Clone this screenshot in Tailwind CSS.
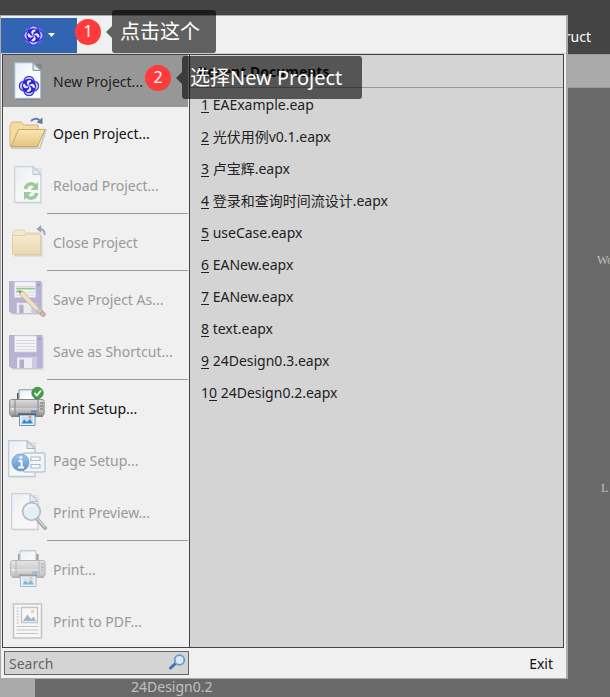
<!DOCTYPE html>
<html lang="zh-CN">
<head>
<meta charset="utf-8">
<title>Enterprise Architect</title>
<script src="https://cdn.jsdelivr.net/npm/@tailwindcss/browser@4"></script>
</head>
<body class="relative min-h-screen overflow-hidden bg-[#696969] font-['Noto_Sans','Noto_Sans_CJK_SC',sans-serif] text-sm text-[#222]">

<!-- Shared gradients and symbols -->
<svg class="absolute size-0" aria-hidden="true">
  <defs>
    <linearGradient id="gPage" x1="0" y1="0" x2="1" y2="1"><stop offset="0" stop-color="#e6eef6"/><stop offset=".5" stop-color="#fbfdff"/><stop offset="1" stop-color="#fff"/></linearGradient>
    <linearGradient id="gFolder" x1="0" y1="0" x2="0" y2="1"><stop offset="0" stop-color="#f9e6b6"/><stop offset="1" stop-color="#e5c47c"/></linearGradient>
    <linearGradient id="gPrinter" x1="0" y1="0" x2="0" y2="1"><stop offset="0" stop-color="#dcdcdc"/><stop offset=".5" stop-color="#b8b8b8"/><stop offset=".55" stop-color="#d0d0d0"/><stop offset="1" stop-color="#969696"/></linearGradient>
    <linearGradient id="gInfo" x1="0" y1="0" x2="0" y2="1"><stop offset="0" stop-color="#6fb0ec"/><stop offset="1" stop-color="#1c5fb8"/></linearGradient>
    <symbol id="knot" viewBox="0 0 20 20">
      <g fill="#4038dc"><circle cx="10" cy="5.500" r="5.300"/><circle cx="14.500" cy="10" r="5.300"/><circle cx="10" cy="14.500" r="5.300"/><circle cx="5.500" cy="10" r="5.300"/></g>
      <g fill="#c8c8ff"><circle cx="10" cy="5.500" r="4.100"/><circle cx="14.500" cy="10" r="4.100"/><circle cx="10" cy="14.500" r="4.100"/><circle cx="5.500" cy="10" r="4.100"/></g>
      <circle cx="10" cy="10" r="6.800" fill="#2c24d0"/>
      <g fill="#ecebff">
        <path d="M10 10C7 8.500 7.200 5 10.500 4.300C12.200 4.500 12.500 5.500 11.500 6.300C9.800 7 9.500 8 10 10Z"/>
        <path d="M10 10C11.500 7 15 7.200 15.700 10.500C15.500 12.200 14.500 12.500 13.700 11.500C13 9.800 12 9.500 10 10Z"/>
        <path d="M10 10C13 11.500 12.800 15 9.500 15.700C7.800 15.500 7.500 14.500 8.500 13.700C10.200 13 10.500 12 10 10Z"/>
        <path d="M10 10C8.500 13 5 12.800 4.300 9.500C4.500 7.800 5.500 7.500 6.300 8.500C7 10.200 8 10.500 10 10Z"/>
      </g>
    </symbol>
    <symbol id="sheet" viewBox="0 0 28 38">
      <path d="M2 2H28V38H2Z" fill="#000" opacity=".1"/>
      <path d="M.7.7H19L26.800 8.500V36.300H.7Z" fill="url(#gPage)" stroke="#a3b5c6" stroke-width="1.2"/>
      <path d="M19 .8V8.500H26.800Z" fill="#dde6ee" stroke="#7f96ac" stroke-width="1"/>
    </symbol>
    <symbol id="floppy" viewBox="0 0 35 35">
      <path d="M2 2H35V35H3Z" fill="#000" opacity=".12"/>
      <path d="M.5.5H33V33H2.500L.5 31Z" fill="#928bc2" stroke="#8a83b8"/>
      <path d="M5.500.8H27.500V17H5.500Z" fill="#f8f8fc" stroke="#b9b4da" stroke-width=".7"/>
      <path d="M7 5.500H26M7 8.500H26M7 11.500H26M7 14.500H26" stroke="#c8c8d0"/>
      <path d="M8 22.500H28V33H8Z" fill="#ececf2"/><path d="M10.500 24.500H15V33H10.500Z" fill="#8a83b4"/><path d="M23 23H28V33H23Z" fill="#b7b1da"/>
      <circle cx="30.500" cy="4" r="1.2" fill="#655da0"/>
    </symbol>
    <symbol id="printer" viewBox="0 0 38 38">
      <path d="M10 .8H26V13H10Z" fill="url(#gPage)" stroke="#7c98b4"/>
      <path d="M8 4H9.500V11H8ZM26.500 4H28.500V11H26.500Z" fill="#555"/>
      <path d="M2 26H34V28H2Z" fill="#444" opacity=".65"/>
      <rect x=".6" y="10.500" width="34.500" height="16" rx="2" fill="url(#gPrinter)" stroke="#898989"/>
      <path d="M6 11V26M29 11V26" stroke="#888"/><path d="M31 14H34M31 17H34M31 20H34" stroke="#666"/>
      <circle cx="3.500" cy="20" r="1" fill="#fff"/>
      <path d="M22 22.500H28" stroke="#4c86d8" stroke-width="2"/>
      <path d="M9.500 24.500H27V26.500H9.500Z" fill="#3b3b3b"/>
      <path d="M10.500 26H26V36.500H10.500Z" fill="#edf6ff" stroke="#6b8fb4"/>
      <path d="M12.500 27.500H24V34.500H12.500Z" fill="#bfe0fa"/>
      <path d="M12.500 34.500L15 30.500L18 33L21 30L24 34.500Z" fill="#3f83cf"/><circle cx="21" cy="28" r="1.500" fill="#f0a24c"/>
    </symbol>
  </defs>
</svg>

<!-- Application behind the menu -->
<div class="absolute inset-0 flex flex-col overflow-hidden" aria-hidden="true">
  <div class="flex h-[54px] items-center justify-end bg-[#444] pr-[19px] pt-5 text-white">Construct</div>
  <div class="h-[34px] shrink-0 border-y border-[#999] bg-[#aaa]"></div>
  <div class="flex grow">
    <div class="w-[35px] bg-[#aaa]"></div>
    <div class="relative grow">
      <span class="absolute left-[562px] top-[164px] font-['Liberation_Serif',serif] text-xs text-[#c0c0c0]">Wo</span>
      <span class="absolute left-[566px] top-[392px] font-['Liberation_Serif',serif] text-xs text-[#c0c0c0]">L</span>
      <span class="absolute bottom-0 left-24 text-[#c0c0c0]">24Design0.2</span>
    </div>
  </div>
</div>

<!-- Application menu -->
<main class="relative mr-[42px] mt-[15px] border border-r-2 border-[#aaa] bg-[#f0f0f0]">
  <header class="flex h-[38px] items-center border-b border-[#ccc] pb-px pt-[2px]">
    <button class="flex h-[35px] w-[76px] items-center justify-center gap-1 bg-[#3265b1]" aria-label="Application menu">
      <svg class="size-[21px]" viewBox="0 0 21 21"><circle cx="10.500" cy="10.500" r="10" fill="#6f86e8" opacity=".6"/><use href="#knot" width="21" height="21"/></svg>
      <svg class="h-1 w-[7px]" viewBox="0 0 7 4"><path d="M0 0H7L3.500 4Z" fill="#fff"/></svg>
    </button>
  </header>

  <div class="ml-px mr-[2px] flex border border-[#444]">
    <nav class="w-[187px] shrink-0 border-r border-[#444] bg-[#f0f0f0] pr-px text-[#999]">
      <button class="flex h-[52px] w-full items-center gap-[6px] bg-[#979797] text-[#222]">
        <svg class="h-[52px] w-11 shrink-0" viewBox="0 0 44 52"><use href="#sheet" x="11" y="7" width="28" height="38"/><use href="#knot" x="15.500" y="20.500" width="21" height="21"/></svg><span class="pt-[2px]">New Project...</span>
      </button>
      <button class="flex h-[52px] w-full items-center gap-[6px] text-[#111]">
        <svg class="h-[52px] w-11 shrink-0" viewBox="0 0 44 52">
          <path d="M8 41H37L43 22" fill="none" stroke="#000" stroke-width="2" opacity=".15"/>
          <path d="M7 39V18L9 15H18L21 18H35V39Z" fill="#f2dca4" stroke="#d4b070"/>
          <path d="M8 39.500L15.500 22.500H42L34.500 39.500Z" fill="url(#gFolder)" stroke="#cda55c"/>
          <path d="M28 14C31 10.500 36 11 37.500 15" fill="none" stroke="#66809f" stroke-width="2"/><path d="M33.500 15.500L39.500 17L39.500 10.500Z" fill="#5d7898"/>
        </svg><span class="pt-[2px]">Open Project...</span>
      </button>
      <button class="flex h-[52px] w-full items-center gap-[6px]" disabled>
        <svg class="h-[52px] w-11 shrink-0 opacity-50" viewBox="0 0 44 52"><use href="#sheet" x="11" y="7" width="28" height="38"/>
          <g fill="none" stroke="#45a84b" stroke-width="3.500"><path d="M22.500 30C23 25 29 23 32.500 27"/><path d="M33.500 34C33 39 27 41 23.500 37"/></g>
          <path d="M35 23V31H27.500ZM21 41V33H28.500Z" fill="#45a84b"/></svg><span class="pt-[2px]">Reload Project...</span>
      </button>
      <hr class="my-[2px] ml-11 border-[#999]">
      <button class="flex h-[52px] w-full items-center gap-[6px]" disabled>
        <svg class="h-[52px] w-11 shrink-0 opacity-55" viewBox="0 0 44 52">
          <path d="M11 39.500H38.500V20" fill="none" stroke="#000" stroke-width="2" opacity=".2"/>
          <path d="M10 24V16L12 14H21L23 17H36V24Z" fill="#f5e3b8" stroke="#d8b87c"/>
          <path d="M9.500 19.500H21L23 18H37.500V38.500H9.500Z" fill="url(#gFolder)" stroke="#d4ae6c"/>
          <path d="M36 13C40 12.500 42 15 41.500 19" fill="none" stroke="#4e6a8c" stroke-width="2"/><path d="M38 9L33.500 13L38.500 17Z" fill="#4e6a8c"/>
        </svg><span class="pt-[2px]">Close Project</span>
      </button>
      <hr class="my-[2px] ml-11 border-[#999]">
      <button class="flex h-[52px] w-full items-center gap-[6px]" disabled>
        <svg class="h-[52px] w-11 shrink-0 opacity-60" viewBox="0 0 44 52"><use href="#floppy" x="6" y="8" width="34" height="34"/>
          <path d="M13 15.500H32M13 18.500H20" stroke="#45c045" stroke-width="1.300"/>
          <path d="M15.500 17.500L20.500 19L38 37L35 40L17.500 22.500Z" fill="#f1d9a2" stroke="#9c865c" stroke-width=".9"/>
          <path d="M15.500 17.500L18.500 18.500L17 20.500Z" fill="#333"/>
          <path d="M36.500 35L39.500 38L36.500 41L33.500 38Z" fill="#b4b8bc" stroke="#888"/><path d="M39.500 38L42.500 40.500C43 42 41 44 39.500 43.500L36.500 41Z" fill="#d87c80" stroke="#a66"/>
        </svg><span class="pt-[2px]">Save Project As...</span>
      </button>
      <button class="flex h-[52px] w-full items-center gap-[6px]" disabled>
        <svg class="h-[52px] w-11 shrink-0 opacity-60" viewBox="0 0 44 52"><use href="#floppy" x="6" y="10" width="35" height="35"/></svg><span class="pt-[2px]">Save as Shortcut...</span>
      </button>
      <hr class="my-[2px] ml-11 border-[#999]">
      <button class="flex h-[52px] w-full items-center gap-[6px] text-[#111]">
        <svg class="h-[52px] w-11 shrink-0" viewBox="0 0 44 52"><use href="#printer" x="6" y="7" width="38" height="38"/>
          <circle cx="34.500" cy="11" r="5.700" fill="#42a047" stroke="#2d8335" stroke-width=".8"/><path d="M31.500 11L34 13.500L38 8.500" fill="none" stroke="#fff" stroke-width="1.800"/></svg><span class="pt-[2px]">Print Setup...</span>
      </button>
      <button class="flex h-[52px] w-full items-center gap-[6px]" disabled>
        <svg class="h-[52px] w-11 shrink-0 opacity-65" viewBox="0 0 44 52"><use href="#sheet" x="5" y="6" width="28" height="38"/>
          <rect x="20" y="19" width="22" height="19" rx="2" fill="#f4f8fd" stroke="#9cb3cc" stroke-width="1.400"/>
          <path d="M28 23H37V26.500H28ZM28 30.500H37V34H28Z" fill="#fff" stroke="#8a9fba" stroke-width="1.200"/>
          <circle cx="17.500" cy="28.500" r="8.500" fill="url(#gInfo)" stroke="#3f78bd"/>
          <path d="M15.500 27H18.500V33M15 33.500H21" fill="none" stroke="#fff" stroke-width="2"/><circle cx="17.800" cy="23.500" r="1.500" fill="#fff"/>
        </svg><span class="pt-[2px]">Page Setup...</span>
      </button>
      <button class="flex h-[52px] w-full items-center gap-[6px]" disabled>
        <svg class="h-[52px] w-11 shrink-0 opacity-50" viewBox="0 0 44 52"><use href="#sheet" x="8" y="7" width="28" height="38"/>
          <path d="M34 33L42 42" stroke="#666" stroke-width="4" stroke-linecap="round"/><path d="M34.500 33L42 41" stroke="#bbb" stroke-width="1.500"/>
          <circle cx="28.500" cy="25.500" r="8.800" fill="#d9edfb" stroke="#7e8e9c" stroke-width="1.800"/><path d="M22 25C23 20 28 18 33 20" fill="none" stroke="#fff" stroke-width="2"/></svg><span class="pt-[2px]">Print Preview...</span>
      </button>
      <hr class="my-[2px] ml-11 border-[#999]">
      <button class="flex h-[52px] w-full items-center gap-[6px]" disabled>
        <svg class="h-[52px] w-11 shrink-0 opacity-55" viewBox="0 0 44 52"><use href="#printer" x="7" y="7" width="38" height="38"/></svg><span class="pt-[2px]">Print...</span>
      </button>
      <button class="flex h-[52px] w-full items-center gap-[6px]" disabled>
        <svg class="h-[52px] w-11 shrink-0 opacity-50" viewBox="0 0 44 52">
          <path d="M10.500 9H38.500V43H10.500Z" fill="#fff" stroke="#999" stroke-width="1.500"/>
          <path d="M13.500 13H16M13.500 16H16M13.500 19H16M13.500 22H16M13.500 25H16M13.500 28H16M13.500 31.500H35.500M13.500 35H35.500M13.500 38.500H35.500" stroke="#999" stroke-width="1.200"/>
          <path d="M18.500 12.500H34.500V27.500H18.500Z" fill="#fff" stroke="#999" stroke-width="1.300"/>
          <path d="M20 26L24.500 19.500L28 24L30.500 21.500L33 26Z" fill="#4a83ad"/><circle cx="29.500" cy="16.500" r="1.800" fill="#e7b257"/></svg><span class="pt-[2px]">Print to PDF...</span>
      </button>
    </nav>

    <section class="grow bg-[#d4d4d4]">
      <h2 class="flex h-[33px] items-center border-b border-[#999] pl-2 pt-[2px] font-bold text-[#111]">Recent Documents</h2>
      <ul class="pl-[11px]">
        <li class="flex h-8 items-center pt-[2px]"><a href="#"><u class="underline-offset-2">1</u> EAExample.eap</a></li>
        <li class="flex h-8 items-center pt-[2px]"><a href="#"><u class="underline-offset-2">2</u> 光伏用例v0.1.eapx</a></li>
        <li class="flex h-8 items-center pt-[2px]"><a href="#"><u class="underline-offset-2">3</u> 卢宝辉.eapx</a></li>
        <li class="flex h-8 items-center pt-[2px]"><a href="#"><u class="underline-offset-2">4</u> 登录和查询时间流设计.eapx</a></li>
        <li class="flex h-8 items-center pt-[2px]"><a href="#"><u class="underline-offset-2">5</u> useCase.eapx</a></li>
        <li class="flex h-8 items-center pt-[2px]"><a href="#"><u class="underline-offset-2">6</u> EANew.eapx</a></li>
        <li class="flex h-8 items-center pt-[2px]"><a href="#"><u class="underline-offset-2">7</u> EANew.eapx</a></li>
        <li class="flex h-8 items-center pt-[2px]"><a href="#"><u class="underline-offset-2">8</u> text.eapx</a></li>
        <li class="flex h-8 items-center pt-[2px]"><a href="#"><u class="underline-offset-2">9</u> 24Design0.3.eapx</a></li>
        <li class="flex h-8 items-center pt-[2px]"><a href="#">1<u class="underline-offset-2">0</u> 24Design0.2.eapx</a></li>
      </ul>
    </section>
  </div>

  <footer class="flex h-[30px] items-center justify-between pl-[3px] pr-[13px]">
    <label class="flex h-6 w-[185px] items-center border border-[#666] bg-[#d4d4d4] pl-1 pr-[2px]">
      <input type="text" aria-label="Search" placeholder="Search" class="min-w-0 grow bg-transparent pt-[2px] outline-none placeholder:text-[#666]">
      <svg class="h-[18px] w-[18px] shrink-0" viewBox="0 0 18 18" fill="none"><path d="M7.500 9.500L2.500 14" stroke="#3474b8" stroke-width="3" stroke-linecap="round"/><circle cx="11.500" cy="6" r="4.800" fill="#dbe7f3" stroke="#6b9bce" stroke-width="1.800"/></svg>
    </label>
    <button class="pt-[2px] text-[#111]">Exit</button>
  </footer>
</main>

<!-- Step callouts -->
<div class="absolute left-[75px] top-[10px] flex items-center text-white">
  <span class="flex size-[26px] items-center justify-center rounded-full bg-[#ff3a3a] pb-[2px] text-base">1</span>
  <svg class="ml-[5px] h-3 w-[6px]" viewBox="0 0 6 12"><path d="M6 0V12L0 6Z" fill="#000" fill-opacity=".6"/></svg>
  <p class="flex h-[43px] items-center rounded-[3px] bg-black/60 pl-2 pr-4 text-xl">点击这个</p>
</div>
<div class="absolute left-[145px] top-[56px] flex items-center text-white">
  <span class="flex size-[26px] items-center justify-center rounded-full bg-[#ff3a3a] pb-[2px] text-base">2</span>
  <svg class="ml-[5px] h-3 w-[6px]" viewBox="0 0 6 12"><path d="M6 0V12L0 6Z" fill="#000" fill-opacity=".6"/></svg>
  <p class="flex h-[43px] items-center rounded-[3px] bg-black/60 pl-2 pr-5 text-xl">选择New Project</p>
</div>
</body>
</html>
